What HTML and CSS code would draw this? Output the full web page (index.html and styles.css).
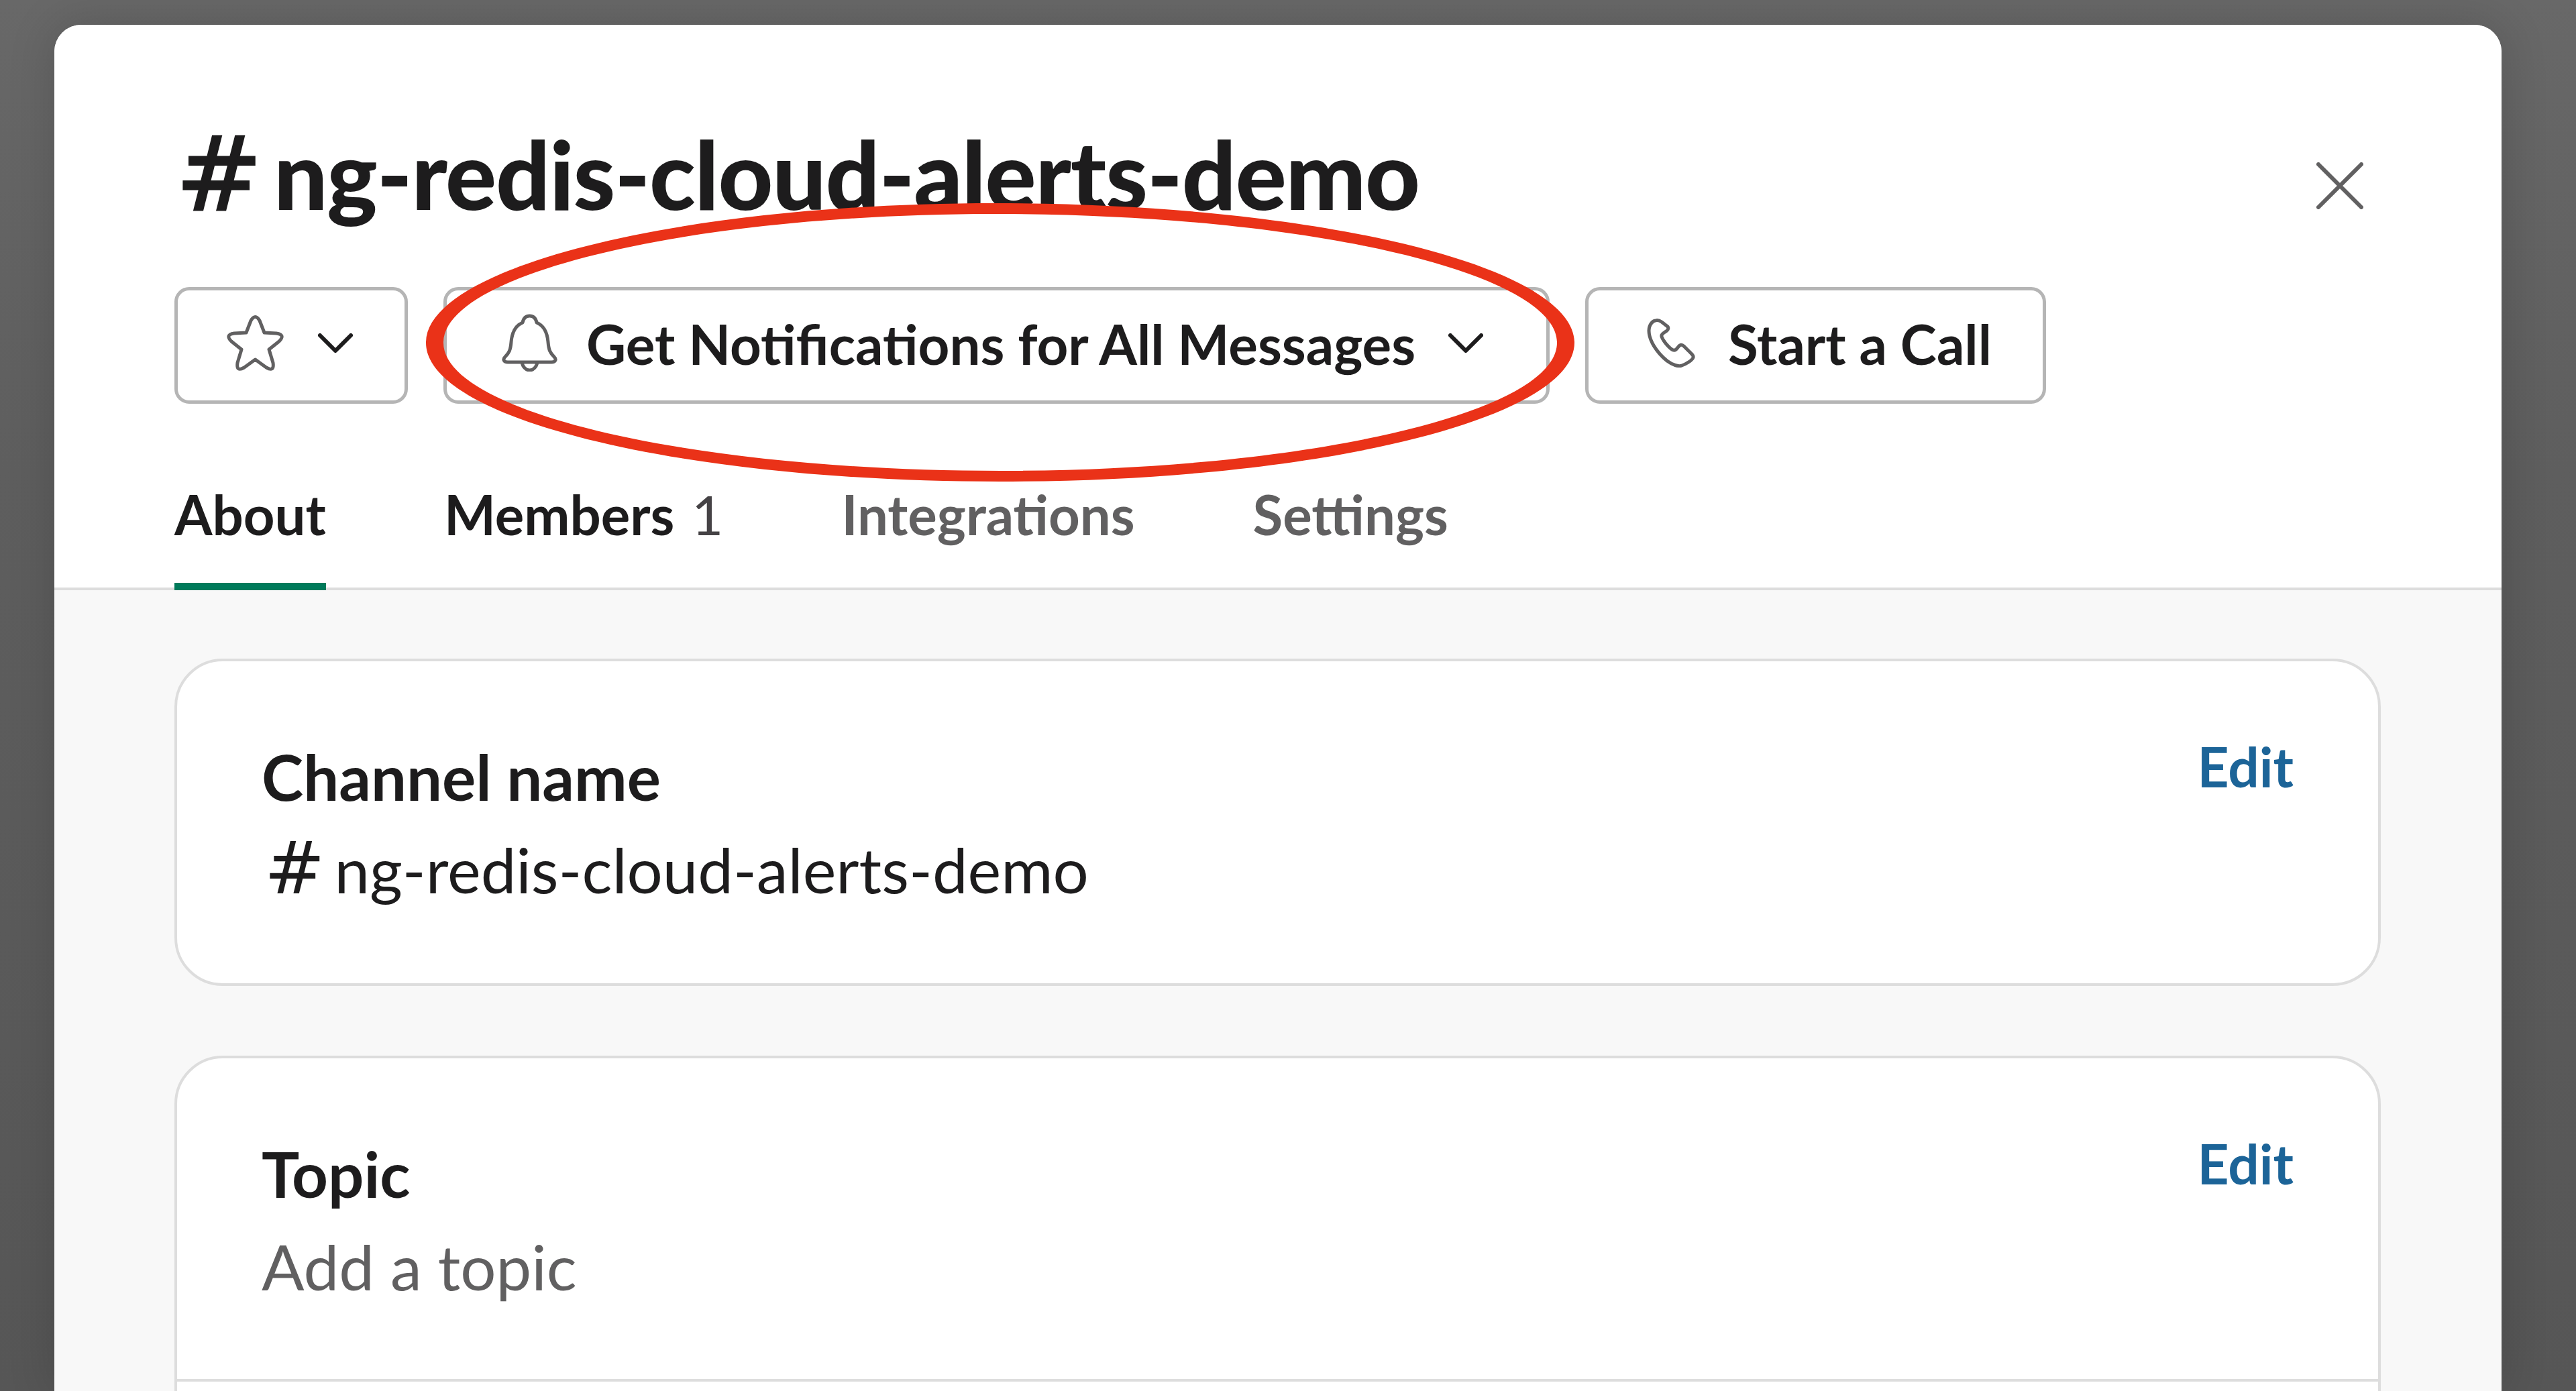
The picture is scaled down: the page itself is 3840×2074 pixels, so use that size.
FILE: index.html
```html
<!DOCTYPE html>
<html lang="en">
<head>
<meta charset="utf-8">
<title>ng-redis-cloud-alerts-demo</title>
<link rel="stylesheet" href="styles.css">
</head>
<body>
<div class="modal">
  <header class="head">
    <div class="title-row">
      <h1 class="title"><span class="hash">#</span><span class="title-name">ng-redis-cloud-alerts-demo</span></h1>
      <svg class="close" viewBox="0 0 70 70"><path d="M3 3 L67 67 M67 3 L3 67"/></svg>
    </div>
    <div class="actions">
      <button class="btn btn-star">
        <svg class="ic-star" viewBox="0 0 85 84"><path d="M36 9 Q42.5 -2 49 9 L56 27 L74 28 Q88 30 78 40 L63 52 L69 72 Q71 86 59 79 L42.5 67 L26 79 Q14 86 16 72 L22 52 L7 40 Q-3 30 11 28 L29 27 Z"/></svg>
        <svg class="chev" viewBox="0 0 52 29"><path d="M3 3 L26 26 L49 3"/></svg>
      </button>
      <button class="btn btn-bell">
        <svg class="ic-bell" viewBox="0 0 83 86"><path d="M41.5 3 C35 3 32 8 31 13 C19 18 15 30 14 42 C13 54 11 58 5 64 C1 68 3 72 9 72 L74 72 C80 72 82 68 78 64 C72 58 70 54 69 42 C68 30 64 18 52 13 C51 8 48 3 41.5 3 Z M30 72 C31 79 36 84 41.5 84 C47 84 52 79 53 72"/></svg>
        <span class="btn-text">Get Notifications for All Messages</span>
        <svg class="chev" viewBox="0 0 52 29"><path d="M3 3 L26 26 L49 3"/></svg>
      </button>
      <button class="btn btn-call">
        <svg class="ic-phone" viewBox="0 0 72 73"><path d="M13 3 C9 3 3 9 3 18 C3 32 14 50 30 63 C38 69 47 72 52 70 C58 68 68 62 69 58 C70 55 66 52 62 48 L55 41 C52 38 49 39 47 42 C44 46 42 48 39 47 C33 44 24 33 22 27 C21 24 24 22 27 20 C31 18 33 15 31 12 L22 5 C19 3 16 2 13 3 Z"/></svg>
        <span class="btn-text">Start a Call</span>
      </button>
    </div>
    <nav class="tabs">
      <span class="tab active">About</span>
      <span class="tab strong">Members <span class="count">1</span></span>
      <span class="tab">Integrations</span>
      <span class="tab">Settings</span>
    </nav>
  </header>
  <main class="content">
    <section class="card">
      <div class="row row-name">
        <div>
          <div class="label">Channel name</div>
          <div class="value"><span class="value-hash">#</span>ng-redis-cloud-alerts-demo</div>
        </div>
        <span class="edit">Edit</span>
      </div>
    </section>
    <section class="card">
      <div class="row row-topic">
        <div>
          <div class="label">Topic</div>
          <div class="value muted">Add a topic</div>
        </div>
        <span class="edit">Edit</span>
      </div>
      <div class="row-next"></div>
    </section>
  </main>
  <svg class="ring" viewBox="0 0 1716 415">
    <path fill-rule="evenodd" d="M2 208 C2 94 385 0 850 0 C1331 0 1714 94 1714 208 C1714 322 1331 415 858 415 C385 415 2 322 2 208 Z M28 208 C28 104 400 16 850 16 C1316 16 1688 104 1688 208 C1688 312 1316 399 858 399 C400 399 28 312 28 208 Z"/>
  </svg>
</div>
</body>
</html>
```
FILE: styles.css
```css
* { box-sizing: border-box; }
html, body { height: 100%; }
body {
  margin: 0;
  height: 2074px;
  overflow: hidden;
  padding: 37px 111px 0 81px;
  background: linear-gradient(180deg, #686868 0, #5e5e5e 700px, #565656 2074px);
  font-family: "Lato", "Noto Sans", sans-serif;
  color: #1d1c1d;
}
.modal {
  position: relative;
  width: 3648px;
  height: 2037px;
  overflow: hidden;
  border-radius: 40px 40px 0 0;
  background: #fff;
  box-shadow: 0 0 70px rgba(0,0,0,.16);
}
.head {
  height: 843px;
  padding: 0 179px;
  border-bottom: 4px solid #ddd;
  background: #fff;
}
.title-row {
  height: 391px;
  display: flex;
  justify-content: space-between;
  align-items: flex-start;
  padding-top: 141px;
}
.title {
  display: flex;
  align-items: baseline;
  margin: 0 0 0 2px;
  font-size: 142px;
  line-height: 160px;
  font-weight: 900;
  letter-spacing: -1.2px;
  white-space: nowrap;
}
.hash {
  font-family: "DejaVu Sans", sans-serif;
  font-size: 154px;
  line-height: 160px;
  font-weight: 400;
  -webkit-text-stroke: 3px #1d1c1d;
  margin-right: 17px;
  letter-spacing: 0;
}
.close {
  width: 70px;
  height: 70px;
  margin-top: 64px;
  margin-right: 27px;
  fill: none;
  stroke: #616061;
  stroke-width: 6;
  stroke-linecap: round;
}
.actions { display: flex; gap: 53px; }
.btn {
  display: flex;
  align-items: center;
  height: 174px;
  padding: 0;
  border: 5px solid #b5b5b5;
  border-radius: 22px;
  background: #fff;
  font: 700 81.7px/1 "Lato", sans-serif;
  color: #1d1c1d;
}
.btn-text { white-space: nowrap; margin-top: -4px; }
.btn-star { width: 348px; padding-left: 73px; }
.btn-bell { width: 1649px; padding-left: 82px; }
.btn-call { width: 687px; padding-left: 87px; }
.btn svg { fill: none; flex: none; margin-bottom: 8px; }
.ic-star { width: 85px; height: 84px; margin-right: 51px; }
.ic-bell { width: 83px; height: 86px; margin-right: 43px; }
.ic-phone { width: 72px; height: 73px; margin-right: 49px; }
.ic-star path, .ic-bell path, .ic-phone path {
  stroke: #616061;
  stroke-width: 5;
  stroke-linejoin: round;
}
.chev { width: 52px; height: 29px; }
.chev path { stroke: #1d1c1d; stroke-width: 6; stroke-linecap: round; stroke-linejoin: round; }
.btn-bell .chev { margin-left: 49px; }
.tabs {
  display: flex;
  gap: 176px;
  height: 278px;
  align-items: flex-end;
  font-size: 81.5px;
  font-weight: 700;
  color: #616061;
}
.tab { padding-bottom: 63px; line-height: 100px; white-space: nowrap; }
.tab.active {
  color: #1d1c1d;
  padding-bottom: 52px;
  border-bottom: 11px solid #007a5a;
}
.tab.strong { color: #1d1c1d; }
.count { font-weight: 400; color: #454245; margin-left: 6px; }
.content {
  height: 1194px;
  padding: 102px 180px 0 179px;
  background: #f8f8f8;
  display: flex;
  flex-direction: column;
  gap: 104px;
}
.card {
  flex: none;
  border: 4px solid #ddd;
  border-radius: 72px;
  background: #fff;
}
.row {
  display: flex;
  justify-content: space-between;
  align-items: flex-start;
  padding: 122px 126px 0 126px;
}
.row-name { height: 480px; }
.row-topic { height: 482px; border-bottom: 4px solid #ddd; }
.row-next { height: 200px; }
.label { font-size: 94px; line-height: 100px; font-weight: 700; }
.value { font-size: 94px; line-height: 110px; margin-top: 33px; color: #1d1c1d; }
.value-hash {
  font-family: "DejaVu Sans", sans-serif;
  font-size: 108px;
  line-height: 90px;
  margin-left: 4px;
  margin-right: 14px;
}
.muted { color: #616061; }
.edit { font-size: 82px; line-height: 100px; font-weight: 700; margin-top: -16px; color: #1c6498; }
.row-topic .edit { margin-top: -16px; }
.ring {
  position: absolute;
  left: 552px;
  top: 266px;
  width: 1716px;
  height: 415px;
  fill: #ea3218;
  pointer-events: none;
}
```
